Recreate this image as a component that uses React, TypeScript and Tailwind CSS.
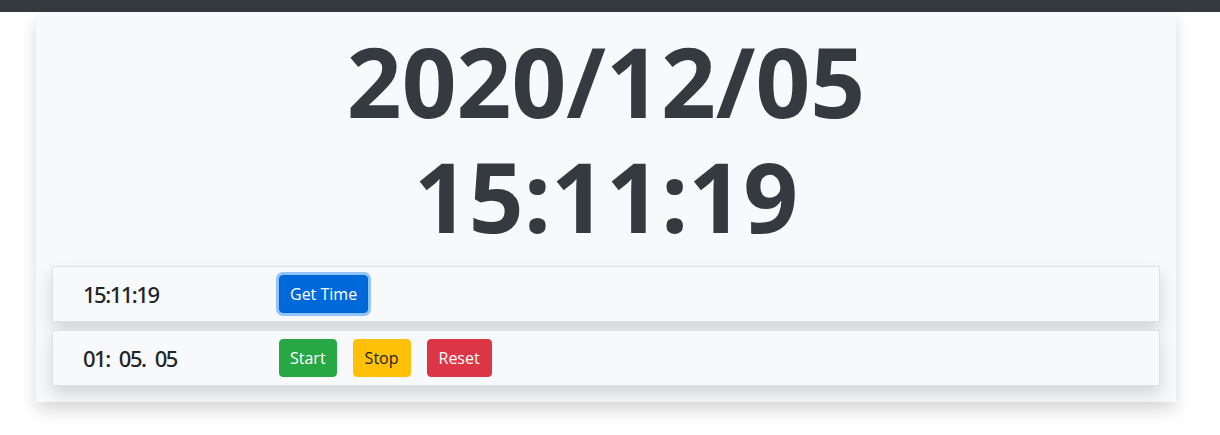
import { FC } from "react";

const BTN =
  "rounded-[4px] border py-[6px] text-base leading-6 font-normal";

const Row: FC<{ value: string; children: React.ReactNode }> = ({
  value,
  children,
}) => (
  <div className="flex items-center border border-[#dee2e6] bg-[#f8f9fa] py-2 shadow-[0_8px_16px_rgba(0,0,0,0.15)]">
    <div className="w-[226px] pl-[30px] font-['Noto_Sans',sans-serif] text-[22px] font-medium leading-[38px] tracking-[-1.5px] [word-spacing:5px] text-[#212529]">
      {value}
    </div>
    <div className="flex gap-4">{children}</div>
  </div>
);

export default function App() {
  return (
    <div className="min-h-[435px] bg-white font-['Open_Sans',sans-serif]">
      <div className="h-3 bg-[#343a40]" />
      <div className="ml-[36px] w-[1140px] bg-[#f8f9fa] px-4 pb-4 pt-[11px] shadow-[0_8px_16px_rgba(0,0,0,0.15)]">
        <h1 className="mb-[13px] text-center text-[96px] font-bold leading-[1.2] text-[#343a40]">
          2020/12/05
          <br />
          15:11:19
        </h1>
        <div className="flex flex-col gap-2">
          <Row value="15:11:19">
            <button className={`${BTN} border-[#0062cc] bg-[#0069d9] px-[10px] text-white shadow-[0_0_0_3px_rgba(38,143,255,0.5)]`}>
              Get Time
            </button>
          </Row>
          <Row value="01: 05. 05">
            <button className={`${BTN} border-[#28a745] bg-[#28a745] px-[10px] text-white`}>
              Start
            </button>
            <button className={`${BTN} border-[#ffc107] bg-[#ffc107] px-[11px] text-[#212529]`}>
              Stop
            </button>
            <button className={`${BTN} border-[#dc3545] bg-[#dc3545] px-[11px] text-white`}>
              Reset
            </button>
          </Row>
        </div>
      </div>
    </div>
  );
}
